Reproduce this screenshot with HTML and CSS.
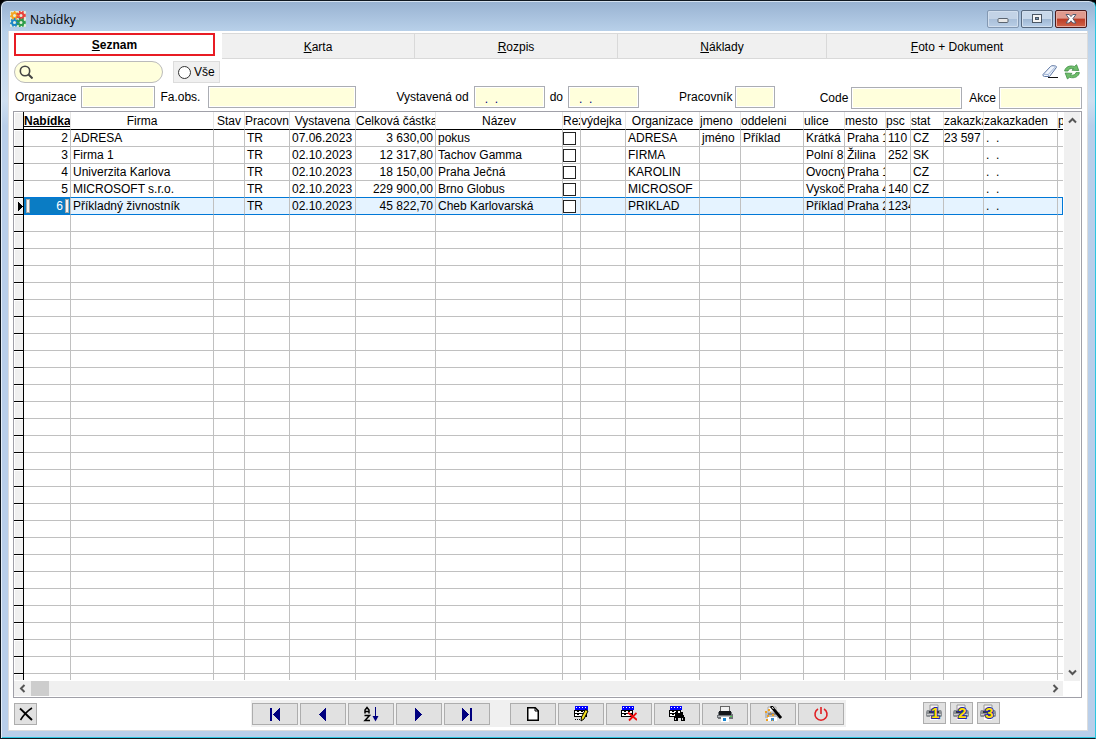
FILE: index.html
```html
<!DOCTYPE html>
<html lang="cs">
<head>
<meta charset="utf-8">
<title>Nabídky</title>
<link rel="stylesheet" href="styles.css">
</head>
<body>
<div class="window">
  <header class="titlebar">
    <svg class="app-icon" width="16" height="16" viewBox="0 0 16 16">
      <rect width="16" height="16" rx="1" fill="#e4eedc"/>
      <g fill="none" stroke-width="2">
        <circle cx="4.5" cy="4.5" r="2.5" stroke="#f5a623"/><circle cx="11" cy="4.5" r="2.5" stroke="#e8413c"/>
        <circle cx="4.5" cy="11.5" r="2.5" stroke="#1c86c8"/><circle cx="11" cy="11.5" r="2.5" stroke="#2d9c4a"/>
      </g>
      <g fill="none" stroke-width="2" stroke-dasharray="1.5 1.6">
        <circle cx="4.5" cy="4.5" r="3.5" stroke="#f5a623"/><circle cx="11" cy="4.5" r="3.8" stroke="#e8413c"/>
        <circle cx="4.5" cy="11.5" r="3.5" stroke="#1c86c8"/><circle cx="11" cy="11.5" r="3.8" stroke="#2d9c4a"/>
      </g>
    </svg>
    <h1 class="title">Nabídky</h1>
    <div class="caption-buttons">
      <button class="caption" aria-label="Minimalizovat"><svg width="12" height="12" viewBox="0 0 12 12"><rect x="1" y="5.500" width="10" height="4" rx="1" fill="#e8e8e8" stroke="#5a6470"/></svg></button>
      <button class="caption solid" aria-label="Maximalizovat"><svg width="12" height="12" viewBox="0 0 12 12"><rect x="1.500" y="1.500" width="9" height="8" fill="#f4f4f4" stroke="#4a5664"/><rect x="4.500" y="4.500" width="3" height="2" fill="#7894b4" stroke="#4a5664"/></svg></button>
      <button class="caption close" aria-label="Zavřít"><svg width="12" height="12" viewBox="0 0 12 12"><path d="M1 1.500h3.200L6 3.600l1.800-2.100H11L7.900 5.700 11 10H7.800L6 7.800 4.200 10H1l3.100-4.300z" fill="#fff" stroke="#545c70"/></svg></button>
    </div>
  </header>

  <main class="client">
    <nav class="tabs" role="tablist">
      <button class="tab active" role="tab" aria-selected="true"><span><u>S</u>eznam</span></button>
      <button class="tab" role="tab"><span><u>K</u>arta</span></button>
      <button class="tab" role="tab"><span><u>R</u>ozpis</span></button>
      <button class="tab" role="tab"><span><u>N</u>áklady</span></button>
      <button class="tab" role="tab"><span><u>F</u>oto + Dokument</span></button>
    </nav>

    <section class="body">
      <div class="search-row">
        <label class="search">
          <svg width="14" height="14" viewBox="0 0 14 14" fill="none" stroke="#444"><circle cx="6" cy="6" r="4.700" stroke-width="1.600"/><path d="M9.500 9.500l4 4" stroke-width="2"/></svg>
          <input type="search" aria-label="Hledat">
        </label>
        <label class="all"><input type="radio" name="scope">Vše</label>
        <div class="tools">
          <button class="tool" aria-label="Vymazat filtr"><svg width="16" height="16" viewBox="0 0 16 16"><path d="M1 10.500L8.500 2.500q1-1 2.500-.8l2.500.3q1.500.4.8 1.600L7.500 12.500H2.500Q.5 12.300 1 10.500z" fill="#f0f5fd" stroke="#5f78a4"/><path d="M1.300 10.200l4.900.3 7.600-8M6.200 10.500l.6 2" fill="none" stroke="#9fb4d6"/><path d="M6 13.500h10" stroke="#111"/></svg></button>
          <button class="tool" aria-label="Obnovit"><svg width="16" height="16" viewBox="0 0 16 16" fill="#6fbd6b" stroke="#3f8f45" stroke-width=".8"><path d="M.6 7C1.300 3 5.600.900 10.400 2.500L12.600.7l2.200 5.900-6.900-.4 1.800-1.500C6.500 4.100 4.500 4.900 4 7z"/><path d="M15.400 8.600c-.7 4-5 6.200-9.800 4.700l-2.200 1.600L1.200 9l6.900.4-1.800 1.600c3.200.6 5.200-.3 5.700-2.400z"/></svg></button>
        </div>
      </div>

      <form class="filters">
        <div class="group">
          <label for="org">Organizace</label><input id="org" class="f-m" type="text">
          <label for="faobs" class="wide">Fa.obs.</label><input id="faobs" class="f-xl" type="text">
        </div>
        <div class="group">
          <label for="od">Vystavená od</label><input id="od" class="f-m date" type="text" value=".  .">
          <label for="do">do</label><input id="do" class="f-m date" type="text" value=".  .">
        </div>
        <div class="group tight">
          <label for="prac">Pracovník</label><input id="prac" class="f-s" type="text">
        </div>
        <div class="group tight lower">
          <label for="code">Code</label><input id="code" class="f-l" type="text">
          <label for="akce" class="spaced">Akce</label><input id="akce" class="f-n" type="text">
        </div>
      </form>

      <div class="grid">
        <div class="grid-view">
          <table class="data">
            <colgroup><col class="w10"><col class="w47"><col class="w143"><col class="w31"><col class="w45"><col class="w66"><col class="w80"><col class="w127"><col class="w18"><col class="w45"><col class="w74"><col class="w41"><col class="w63"><col class="w41"><col class="w41"><col class="w25"><col class="w33"><col class="w40"><col class="w74"><col></colgroup>
            <thead><tr>
              <th class="mark"></th><th class="sorted">Nabídka</th><th class="mid">Firma</th><th class="mid">Stav</th><th>Pracovník</th><th class="mid">Vystavena</th><th>Celková částka</th><th class="mid">Název</th><th>Rez</th><th>výdejka</th><th class="mid">Organizace</th><th>jmeno</th><th>oddeleni</th><th>ulice</th><th>mesto</th><th>psc</th><th>stat</th><th>zakazka</th><th>zakazkaden</th><th>p</th>
            </tr></thead>
            <tbody id="rows"></tbody>
          </table>
        </div>
        <div class="vbar">
          <button class="arrow" aria-label="Nahoru"><svg width="9" height="7" viewBox="0 0 9 7"><path d="M1 5.500L4.500 2 8 5.500" fill="none" stroke="#555" stroke-width="2"/></svg></button>
          <button class="arrow" aria-label="Dolů"><svg width="9" height="7" viewBox="0 0 9 7"><path d="M1 1.500L4.500 5 8 1.500" fill="none" stroke="#555" stroke-width="2"/></svg></button>
        </div>
        <div class="hbar">
          <button class="arrow" aria-label="Vlevo"><svg width="7" height="9" viewBox="0 0 7 9"><path d="M5.500 1L2 4.500 5.500 8" fill="none" stroke="#555" stroke-width="2"/></svg></button>
          <span class="thumb"></span>
          <button class="arrow last" aria-label="Vpravo"><svg width="7" height="9" viewBox="0 0 7 9"><path d="M1.500 1L5 4.500 1.500 8" fill="none" stroke="#555" stroke-width="2"/></svg></button>
        </div>
      </div>

      <footer class="footer">
        <button class="square" aria-label="Zrušit"><svg width="14" height="14" viewBox="0 0 14 14" fill="none" stroke="#000"><path d="M1 1.500c3 2.500 7 7 12 11.500" stroke-width="2"/><path d="M13 1C8 4 4 9 1.500 13" stroke-width="1.500"/></svg></button>
        <div class="toolbar">
          <div class="set">
            <button class="tb" aria-label="První"><svg width="12" height="13" viewBox="0 0 12 13" fill="#00007f" shape-rendering="crispEdges"><path d="M1 0h2v13H1zM11 0v13L4 6.500z"/></svg></button>
            <button class="tb" aria-label="Předchozí"><svg width="12" height="13" viewBox="0 0 12 13" fill="#00007f" shape-rendering="crispEdges"><path d="M9 0v13L2 6.500z"/></svg></button>
            <button class="tb" aria-label="Seřadit"><svg width="16" height="16" viewBox="0 0 16 16" fill="none"><path d="M2 7.500V4L4 1.500 6 4v3.500M2 5.500h4M1.500 9.500h5L2 14.500h5" stroke="#000" stroke-width="1.500"/><path d="M12.500 1v10" stroke="#00007f"/><path d="M9.500 10h6l-3 5.500z" fill="#00007f"/></svg></button>
            <button class="tb" aria-label="Další"><svg width="12" height="13" viewBox="0 0 12 13" fill="#00007f" shape-rendering="crispEdges"><path d="M2 0v13l7-6.500z"/></svg></button>
            <button class="tb" aria-label="Poslední"><svg width="12" height="13" viewBox="0 0 12 13" fill="#00007f" shape-rendering="crispEdges"><path d="M9 0h2v13H9zM1 0v13l7-6.500z"/></svg></button>
          </div>
          <div class="set">
            <button class="tb" aria-label="Nový"><svg width="12" height="14" viewBox="0 0 12 14"><path d="M.75.750h7.500l3 3v9.500H.75z" fill="#fff" stroke="#000" stroke-width="1.500"/><path d="M8 1v3h3" fill="none" stroke="#000"/></svg></button>
            <button class="tb" aria-label="Upravit"><svg width="16" height="16" viewBox="0 0 16 16">
              <g shape-rendering="crispEdges"><path d="M2 0h13v4H2zM1 7h2v1H1z" fill="#00f"/><path d="M3 1h1v1H3zM6 1h1v1H6zM9 1h1v1H9zM12 1h1v1h-1z" fill="#fff"/><path d="M1 4h13v7H1z"/><path d="M2 5h11v2H2zM2 8h10v2H2z" fill="#fff"/><path d="M4 5h2v1H4zM8 5h2v1H8zM4 8h2v1H4zM2 13h1v1H2zM4 13h1v1H4zM6 13h1v1H6z"/></g>
              <path d="M12.500 3.500l2.500 1.500-4 8-3 2 .5-4z" fill="#f2df20" stroke="#000"/></svg></button>
            <button class="tb" aria-label="Smazat"><svg width="16" height="16" viewBox="0 0 16 16">
              <g shape-rendering="crispEdges"><path d="M1 0h12v4H1zM0 7h2v1H0z" fill="#00f"/><path d="M2 1h1v1H2zM5 1h1v1H5zM8 1h1v1H8zM11 1h1v1h-1z" fill="#fff"/><path d="M0 4h12v7H0z"/><path d="M1 5h10v2H1zM1 8h9v2H1z" fill="#fff"/><path d="M3 5h2v1H3zM7 5h2v1H7zM3 8h2v1H3z"/></g>
              <path d="M7 6.500l9 7.500M15.500 7L8 14.500" stroke="#f00c0c" stroke-width="1.800"/></svg></button>
            <button class="tb" aria-label="Najít"><svg width="16" height="16" viewBox="0 0 16 16" shape-rendering="crispEdges">
              <path d="M1 0h12v4H1zM0 7h2v1H0z" fill="#00f"/><path d="M2 1h1v1H2zM5 1h1v1H5zM8 1h1v1H8zM11 1h1v1h-1z" fill="#fff"/><path d="M0 4h12v7H0z"/><path d="M1 5h10v2H1zM1 8h9v2H1z" fill="#fff"/><path d="M3 5h2v1H3zM7 5h2v1H7zM3 8h2v1H3z"/>
              <path d="M6 6h3v2h2V6h3v2l2 4v3h-4v-3h-3v3H5v-3l1-4z"/><path d="M6 12h1v2H6zM13 12h1v2h-1z" fill="#ccc"/></svg></button>
            <button class="tb" aria-label="Tisk"><svg width="16" height="16" viewBox="0 0 16 16" shape-rendering="crispEdges"><path d="M3 0h10v6H3z" fill="#666"/><path d="M4 1h8v5H4z" fill="#f0f0f0"/><path d="M1 6h14v2l1 1v3l-1 1H1l-1-1V9l1-1z" fill="#707478"/><path d="M2 5h12v4H2z" fill="#15181c"/><path d="M1 10h14v1H1z" fill="#b8bcc0"/><path d="M4 11h8v5H4z" fill="#fff"/><path d="M6 12h3v3H6z" fill="#1684d0"/><path d="M13 10h2v1h-2z" fill="#50d050"/></svg></button>
            <button class="tb" aria-label="Návrh sestavy"><svg width="18" height="16" viewBox="0 0 18 16"><path d="M4 1h8v5H4z" fill="#fff" stroke="#aaa"/><path d="M1 6h15v6H1z" fill="#b8bcc0"/><path d="M4 7h8v2H4z" fill="#888"/><path d="M4 11h9v4H4z" fill="#fff"/><path d="M7 12h3v3H7z" fill="#3b8ccc"/><g fill="#f0a020"><path d="M1 5h2v2H1zM4 3h2v2H4zM3 9h2v2H3zM2 13h2v2H2zM8 8h2v2H8zM8 14h1v1H8zM6 6h1v1H6z"/></g><path d="M7 0l10 12" stroke="#000" stroke-width="2.800"/><path d="M8 1l1.500 2" stroke="#fff"/></svg></button>
            <button class="tb" aria-label="Konec"><svg width="16" height="16" viewBox="0 0 16 16" fill="none" stroke="#e02024" stroke-width="1.600"><path d="M5 3a6 6 0 1 0 6 0M8 1v7"/></svg></button>
          </div>
        </div>
        <div class="prints" id="prints"></div>
      </footer>
    </section>
  </main>
</div>
<script src="app.js"></script>
</body>
</html>
```
FILE: styles.css
```css
*, *::before, *::after { box-sizing: border-box; }
html, body { height: 100%; margin: 0; }
body { background: #000; font: 12px/16px "Liberation Sans", Arial, sans-serif; color: #000; overflow: hidden; }
button, input { font: inherit; color: inherit; margin: 0; padding: 0; border-radius: 0; }
svg { display: block; flex: none; }

.window {
  height: 100%; display: flex; flex-direction: column;
  margin: 0; padding: 0 7px 7px;
  border: 1px solid #101820; border-right-color: #2bc6e0;
  border-radius: 7px 7px 0 0;
  background: linear-gradient(#98b2d1 0, #b9d1ea 31px, #cfdff0 100px, #b9cfea 125px);
  box-shadow: inset 1px 0 #e4eef8, inset 0 1px #d5e2f0, inset 0 -1px #2bc6e0;
}
.titlebar { display: flex; align-items: center; height: 30px; padding: 6px 1px 0 2px; gap: 4px; flex: none; }
.title { margin: 0; padding-top: 2px; font: 12px/16px "Open Sans", "Noto Sans", sans-serif; }
.caption-buttons { margin-left: auto; display: flex; gap: 2px; }
.caption {
  width: 32px; height: 18px; display: grid; place-items: center;
  border: 1px solid #8398b2; border-radius: 2px;
  background: linear-gradient(#c3d3e6 50%, #a9bfd9 50%, #b9cee6);
  box-shadow: inset 0 0 0 1px #d2dfee;
}
.caption.solid { border-color: #56687e; background: linear-gradient(#c8d8ea 50%, #9db6d2 50%, #b9d0ea); }
.caption.close { border-color: #4b1a1c; background: linear-gradient(#e09a8e 45%, #bc3c26 50%, #d0644a); box-shadow: inset 0 0 0 1px #e6aca2; }

.client { flex: 1; min-height: 0; display: flex; flex-direction: column; background: #fff; border: 1px solid #dcdcdc; border-top: 0; }
.tabs { display: grid; grid-template-columns: 213fr 193fr 203fr 209fr 260fr; height: 28px; flex: none; border-top: 1px solid #fff; }
.tab { border: 1px solid #d9d9d9; border-left: 0; background: #f0f0f0; margin-top: 1px; padding-top: 1px; }
.tab:last-child { border-right: 0; }
.tab.active { margin: 1px 7px 3px 5px; padding: 0; border: 2px solid #e81c24; background: #fff; font-weight: bold; }

.body { flex: 1; min-height: 0; display: flex; flex-direction: column; padding: 2px 5px 3px 4px; }
.search-row { display: flex; align-items: center; gap: 10px; height: 22px; padding-left: 1px; }
.search { display: flex; align-items: center; gap: 4px; width: 149px; height: 22px; padding: 0 8px 0 4px; border: 1px solid #bbb; border-radius: 11px; background: #ffffdc; }
.search input { width: 100%; border: 0; background: none; outline: 0; }
.all { display: flex; align-items: center; gap: 3px; height: 22px; padding: 0 4px; border: 1px solid #dcdcdc; background: #f0f0f0; }
.all input { appearance: none; width: 13px; height: 13px; border: 1px solid #333; border-radius: 50%; background: #fff; }
.tools { margin-left: auto; display: flex; gap: 6px; padding-right: 2px; }
.tool { border: 0; background: none; }

.filters { display: flex; align-items: flex-start; gap: 40px; padding: 3px 0 2px 2px; }
.group { display: flex; align-items: center; gap: 5px; }
.group.tight { gap: 3px; }
.group.lower { padding-top: 1px; margin-left: auto; }
.wide { padding-right: 3px; }
.spaced { padding-left: 4px; }
.filters input { height: 22px; border: 1px solid #abadb3; background: #ffffdc; box-shadow: inset 0 0 0 1px #fff; padding: 0 5px; }
.f-s { width: 40px; }
.f-m { width: 74px; }
.f-n { width: 83px; }
.f-l { width: 111px; }
.f-xl { width: 148px; }
.filters .date { width: 71px; padding: 3px 0 0 10px; color: #00007f; white-space: pre; }

.grid { flex: 1; min-height: 0; display: grid; grid-template: minmax(0, 1fr) 15px / minmax(0, 1fr) 18px; row-gap: 1px; padding-bottom: 1px; border: 1px solid #a0a0a8; }
.grid-view { overflow: hidden; }
.data { table-layout: fixed; width: 100%; border-collapse: separate; border-spacing: 0; }
.w10 { width: 10px; } .w18 { width: 18px; } .w25 { width: 25px; } .w31 { width: 31px; }
.w33 { width: 33px; } .w40 { width: 40px; } .w41 { width: 41px; } .w45 { width: 45px; }
.w47 { width: 47px; } .w63 { width: 63px; } .w66 { width: 66px; } .w74 { width: 74px; }
.w80 { width: 80px; } .w127 { width: 127px; } .w143 { width: 143px; }
.data th, .data td { height: 17px; padding: 0; line-height: 16px; white-space: pre; overflow: hidden; border: solid #c0c0c0; border-width: 0 1px 1px 0; text-align: left; }
.data th { height: 18px; padding-top: 1px; font-weight: normal; border-right-color: #e5e5e5; border-bottom-color: #000; }
.data th.mid { text-align: center; }
.data th.sorted { font-weight: bold; text-decoration: underline; }
.data td { padding-left: 2px; }
.data .num { text-align: right; padding-right: 2px; }
.data .mark { padding: 0; background: #f0f0f0; border-color: #000; box-shadow: inset 1px 1px #fff; }
.data th:last-child, .data td:last-child { border-right: 0; }
.data td.flush { padding: 0; }
.flush input { appearance: none; display: block; width: 13px; height: 13px; border: 1px solid #222; background: #fff; }
.above td:not(.mark) { border-bottom-color: #0078d7; }
.current td:not(.mark) { background: #e5f3ff; border-bottom-color: #0078d7; }
.data .current td:last-child { border-right: 1px solid #0078d7; }
.data .current td.picked { background: #0a7cc4; color: #fff; padding-right: 1px; }
.picked span { display: flex; justify-content: space-between; }
.picked span::before, .picked span::after { content: ""; width: 4px; height: 14px; margin: 1px 0; background: #f4f4f4; border: 1px solid #a8a8a8; }
.picked b { flex: 1; font-weight: normal; padding-right: 2px; }
.vbar { background: #f0f0f0; display: flex; flex-direction: column; justify-content: space-between; margin: 0 1px -1px; }
.hbar { background: #f0f0f0; display: flex; }
.arrow { width: 16px; height: 15px; border: 0; background: none; display: grid; place-items: center; }
.vbar .arrow { height: 17px; }
.arrow.last { margin-left: auto; }
.thumb { width: 18px; margin-left: 1px; background: #cdcdcd; }

.footer { display: grid; grid-template-columns: 1fr auto 1fr; align-items: center; padding: 2px 0 0 1px; }
.square { width: 23px; height: 22px; display: grid; place-items: center; border: 1px solid #adadad; background: #e1e1e1; }
.toolbar { display: flex; gap: 20px; padding: 3px 2px 2px 1px; background: #f0f0f0; }
.set { display: flex; gap: 2px; }
.tb { width: 46px; height: 22px; display: grid; place-items: center; border: 1px solid #adadad; background: #e1e1e1; }
.prints { display: flex; gap: 4px; justify-content: center; padding: 0 5px 2px 0; }
.badge { font: bold 15px/16px "Liberation Sans", Arial, sans-serif; fill: #ffe000; stroke: #2424a4; stroke-width: 2px; paint-order: stroke; }
```
FILE: app.js
```js
const offers = [
  ["2", "ADRESA", "", "TR", "07.06.2023", "3 630,00", "pokus", "ADRESA", "jméno", "Příklad", "Krátká", "Praha 1", "110", "CZ", "23 597", ". ."],
  ["3", "Firma 1", "", "TR", "02.10.2023", "12 317,80", "Tachov Gamma", "FIRMA", "", "", "Polní 8", "Žilina", "252", "SK", "", ". ."],
  ["4", "Univerzita Karlova", "", "TR", "02.10.2023", "18 150,00", "Praha Ječná", "KAROLIN", "", "", "Ovocný", "Praha 1", "", "CZ", "", ". ."],
  ["5", "MICROSOFT s.r.o.", "", "TR", "02.10.2023", "229 900,00", "Brno Globus", "MICROSOF", "", "", "Vyskoč", "Praha 4", "140", "CZ", "", ". ."],
  ["6", "Příkladný živnostník", "", "TR", "02.10.2023", "45 822,70", "Cheb Karlovarská", "PRIKLAD", "", "", "Příklad", "Praha 2", "1234", "", "", ". ."]
];
const current = 4;
const marker = '<svg width="9" height="9" viewBox="0 0 9 9" shape-rendering="crispEdges"><path d="M4 0l5 4.500L4 9z"/></svg>';
const cell = (text, cls) => `<td${cls ? ` class="${cls}"` : ""}>${text}</td>`;

const filled = offers.map((o, i) => {
  const picked = i === current;
  const cells = [
    cell(picked ? marker : "", "mark"),
    picked ? cell(`<span><b>${o[0]}</b></span>`, "num picked") : cell(o[0], "num"),
    ...o.slice(1, 5).map(t => cell(t)),
    cell(o[5], "num"),
    cell(o[6]),
    cell(`<input type="checkbox" aria-label="Rez ${o[0]}">`, "flush"),
    cell(""),
    ...o.slice(7, 14).map(t => cell(t)),
    cell(o[14], "flush"),
    cell(o[15].replace(" ", "  ")),
    cell("")
  ];
  const cls = picked ? "current" : i === current - 1 ? "above" : "";
  return `<tr class="${cls}">${cells.join("")}</tr>`;
});
const blank = `<tr>${cell("", "mark")}${cell("").repeat(19)}</tr>`;
document.getElementById("rows").innerHTML = filled.join("") + blank.repeat(60);

document.getElementById("prints").innerHTML = [1, 2, 3].map(n => `
  <button class="square" aria-label="Tisk ${n}"><svg width="18" height="18" viewBox="0 0 18 18">
    <path d="M5 1h8v5H5z" fill="#f4f4f4" stroke="#999"/>
    <path d="M2 6h14l1 2v4l-1 1H2l-1-1V8z" fill="#8c9094"/><path d="M4 7h10v2H4z" fill="#33383c"/>
    <path d="M2 10h14v1H2z" fill="#ccc"/><path d="M5 12h8v4H5z" fill="#fff"/><path d="M13 11h2v2h-2z" fill="#60c860"/>
    <text class="badge" x="6" y="14">${n}</text></svg></button>`).join("");
```
